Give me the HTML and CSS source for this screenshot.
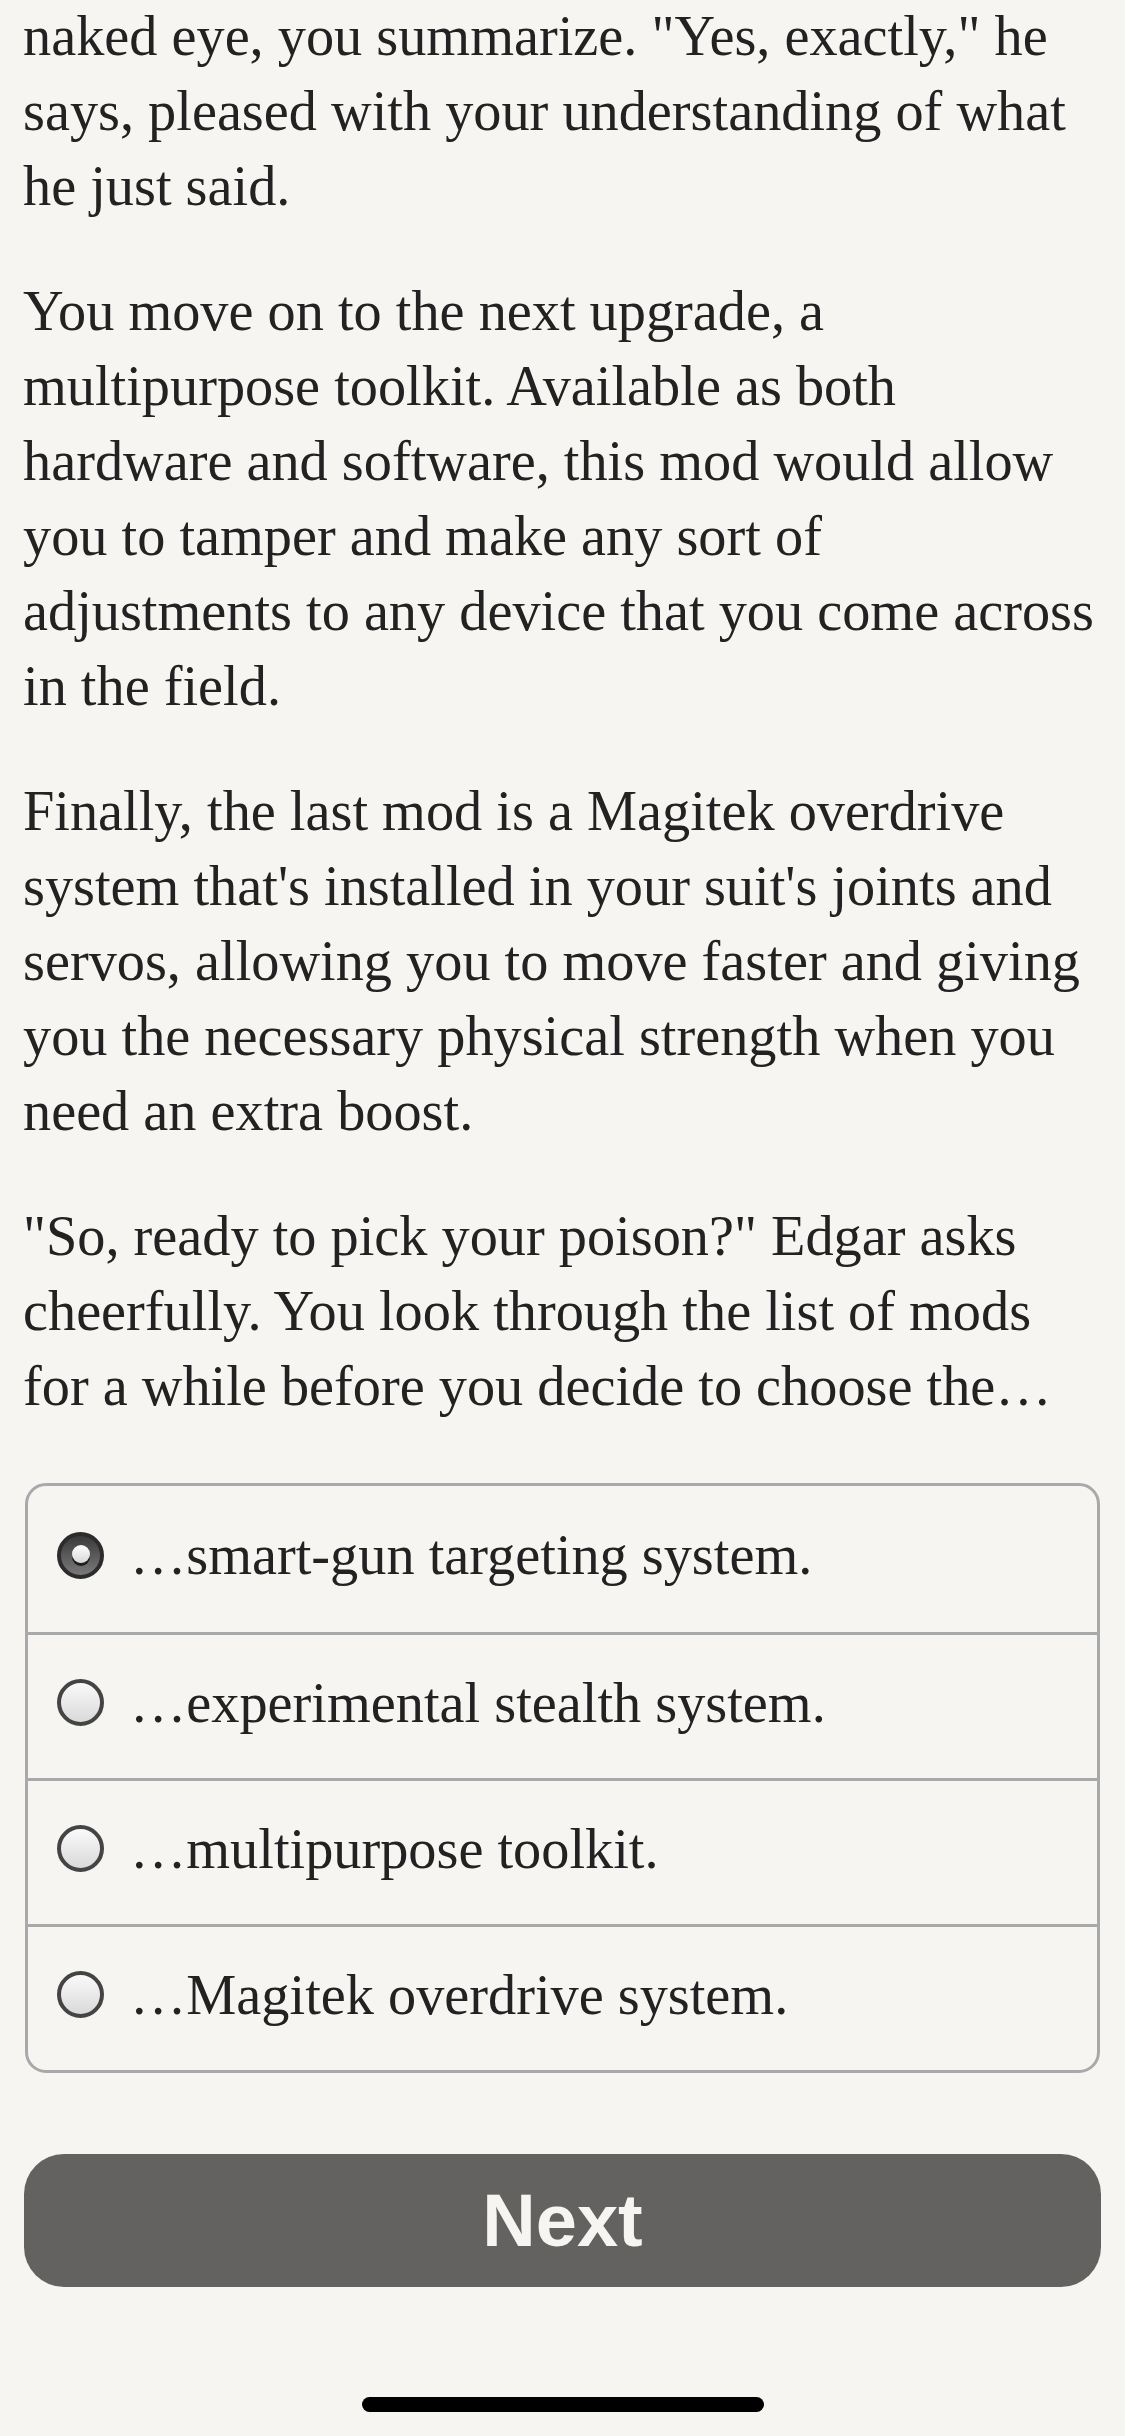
FILE: index.html
```html
<!DOCTYPE html>
<html lang="en">
<head>
  <meta charset="UTF-8" />
  <meta name="viewport" content="width=device-width, initial-scale=1.0" />
  <title>Choice</title>
  <link rel="stylesheet" href="styles.css">
</head>
<body>
  <div class="page">
    <div class="story">
      <p>naked eye, you summarize. "Yes, exactly," he says, pleased with your understanding of what he just said.</p>
      <p>You move on to the next upgrade, a multipurpose toolkit. Available as both hardware and software, this mod would allow you to tamper and make any sort of adjustments to any device that you come across in the field.</p>
      <p>Finally, the last mod is a Magitek overdrive system that's installed in your suit's joints and servos, allowing you to move faster and giving you the necessary physical strength when you need an extra boost.</p>
      <p>"So, ready to pick your poison?" Edgar asks cheerfully. You look through the list of mods for a while before you decide to choose the…</p>
    </div>

    <form class="choices">
      <label class="choice"><input type="radio" name="choice" value="0" checked><span>…smart-gun targeting system.</span></label>
      <label class="choice"><input type="radio" name="choice" value="1"><span>…experimental stealth system.</span></label>
      <label class="choice"><input type="radio" name="choice" value="2"><span>…multipurpose toolkit.</span></label>
      <label class="choice"><input type="radio" name="choice" value="3"><span>…Magitek overdrive system.</span></label>
    </form>

    <button class="next-btn" type="button">Next</button>
  </div>
  <div class="home-indicator"></div>
</body>
</html>
```

FILE: styles.css
```css
* { margin:0; padding:0; box-sizing:border-box; }
html, body { background:#f7f5f2; }
body {
  font-family:"Liberation Serif", "Times New Roman", serif;
  color:#222;
  width:1125px; height:2436px; overflow:hidden;
  position:relative;
}
.page { padding:0 21px 0 23px; margin-top:-1px; }

.story p {
  font-size:56.3px; line-height:75px;
  margin-bottom:50px;
}
.story p:last-child { margin-bottom:0; }

.choices {
  margin:59px 4px 0 2px;
  border:3px solid #a7a9ab; border-radius:21px;
  overflow:hidden;
}
.choice {
  display:flex; align-items:center;
  height:146px; padding-left:29px; padding-bottom:8px;
  font-size:56.3px;
}
.choice + .choice { border-top:3px solid #a7a9ab; }
.choice span { margin-left:26px; }

.choice input {
  appearance:none; -webkit-appearance:none;
  width:47px; height:47px; flex:none;
  border-radius:50%;
  border:4px solid #444;
  background:linear-gradient(#fafafa, #d9d9d9);
  position:relative;
}
.choice input:checked {
  border-color:#2c2c2c;
  background:linear-gradient(#3a3a3a, #7a7a7a);
}
.choice input:checked::after {
  content:""; position:absolute;
  left:50%; top:50%; width:18px; height:18px;
  margin:-10px 0 0 -9px;
  border-radius:50%;
  background:linear-gradient(#ffffff, #d8d8d8);
  box-shadow:0 3px 0 #1e1e1e;
}

.next-btn {
  display:block; width:1077px; height:133px;
  margin:81px 0 0 1px;
  border:none; border-radius:40px;
  background:#636260; color:#f7f5f2;
  font-family:"Liberation Sans", Arial, sans-serif;
  font-weight:bold; font-size:74px;
}

.home-indicator {
  position:absolute; left:362px; bottom:24px;
  width:402px; height:15px;
  border-radius:8px; background:#000;
}
```
